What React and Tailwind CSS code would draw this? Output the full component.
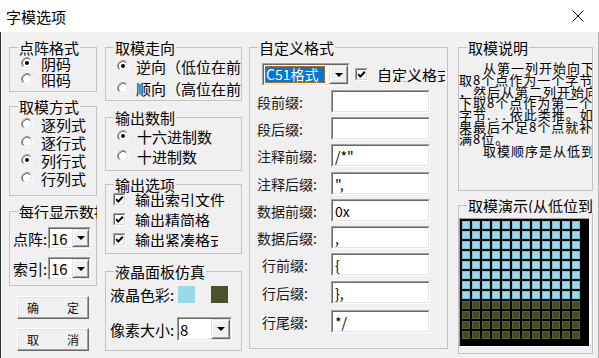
import React from "react";

const Radio = ({ checked }) => (
  <svg width="12" height="12" viewBox="0 0 12 12" className="shrink-0">
    <circle cx="6" cy="6" r="4.2" fill="#fff" />
    <path d="M2.11 9.89 A5.5 5.5 0 0 1 9.89 2.11" fill="none" stroke="#a0a0a0" />
    <path d="M9.89 2.11 A5.5 5.5 0 0 1 2.11 9.89" fill="none" stroke="#ffffff" />
    <path d="M2.82 9.18 A4.5 4.5 0 0 1 9.18 2.82" fill="none" stroke="#696969" />
    <path d="M9.18 2.82 A4.5 4.5 0 0 1 2.82 9.18" fill="none" stroke="#e3e3e3" />
    {checked && <circle cx="6" cy="6" r="2" fill="#000" />}
  </svg>
);

const Check = () => (
  <svg width="13" height="13" viewBox="0 0 13 13" className="shrink-0">
    <rect x="1" y="1" width="11" height="11" fill="#fff" />
    <path d="M0.5 12.5 V0.5 H12.5" fill="none" stroke="#a0a0a0" />
    <path d="M0.5 12.5 H12.5 V0.5" fill="none" stroke="#ffffff" />
    <path d="M1.5 11.5 V1.5 H11.5" fill="none" stroke="#696969" />
    <path d="M1.5 11.5 H11.5 V1.5" fill="none" stroke="#d4d4d4" />
    <path d="M3.2 6.2 L5.3 8.6 L9.8 3.8" fill="none" stroke="#000" strokeWidth="2" />
  </svg>
);

const Sunken = ({ className = "", children }) => (
  <div className={`flex shrink-0 border border-t-[#a0a0a0] border-l-[#a0a0a0] border-r-white border-b-white ${className}`}>
    <div className="flex flex-1 min-w-0 border border-t-[#696969] border-l-[#696969] border-r-[#e3e3e3] border-b-[#e3e3e3] bg-white">
      {children}
    </div>
  </div>
);

const DropBtn = ({ w = "w-[17px]" }) => (
  <div className={`${w} h-full shrink-0 flex items-center justify-center bg-[#f0f0f0] border border-t-[#e3e3e3] border-l-[#e3e3e3] border-r-[#696969] border-b-[#696969] shadow-[inset_1px_1px_0_#fff,inset_-1px_-1px_0_#a0a0a0]`}>
    <svg width="8" height="4" viewBox="0 0 8 4">
      <path d="M0 0H8L4 4Z" fill="#000" />
    </svg>
  </div>
);

const Select = ({ className, text, w }) => (
  <Sunken className={className}>
    <div className="flex-1 flex items-center pl-[1px] text-[15px] leading-none overflow-hidden">{text}</div>
    <DropBtn w={w} />
  </Sunken>
);

const Group = ({ title, className = "", legend = "", children }) => (
  <fieldset className={`min-w-0 shrink-0 border border-[#c3c3c3] ${className}`}>
    <legend className={`ml-[8px] px-[1px] text-[15px] leading-[15px] whitespace-nowrap ${legend}`}>{title}</legend>
    {children}
  </fieldset>
);

const Btn = ({ a, b, className = "" }) => (
  <div className={`w-[72px] h-[23px] flex items-center justify-center gap-[28px] bg-[#f0f0f0] border border-t-white border-l-white border-r-[#696969] border-b-[#696969] shadow-[inset_-1px_-1px_0_#a0a0a0,inset_1px_1px_0_#e3e3e3] text-[12px] leading-none text-[#111] ${className}`}>
    <span>{a}</span>
    <span>{b}</span>
  </div>
);

const fields = [
  ["段前缀:", "", "mt-[4px]", "pl-[7px]"],
  ["段后缀:", "", "mt-[4px]", "pl-[7px]"],
  ["注释前缀:", "/*\"", "mt-[4px]", "pl-[7px]"],
  ["注释后缀:", "\",", "mt-[5px]", "pl-[7px]"],
  ["数据前缀:", "0x", "mt-[4px]", "pl-[7px]"],
  ["数据后缀:", ",", "mt-[4px]", "pl-[7px]"],
  ["行前缀:", "{", "mt-[4px]", "pl-[12px]"],
  ["行后缀:", "},", "mt-[5px]", "pl-[12px]"],
  ["行尾缀:", "*/", "mt-[6px]", "pl-[12px]"],
];

const desc = [
  ["从第一列开始向下每", "pl-[24px]"],
  ["取8个点作为一个字节", ""],
  ["，然后从第二列开始向", ""],
  ["下取8个点作为第二个", ""],
  [null, ""],
  ["果最后不足8个点就补", ""],
  ["满8位。", ""],
  ["取模顺序是从低到高", "pl-[24px]"],
];

const cells = Array.from({ length: 144 }, (_, i) => i < 96);

export default function App() {
  return (
    <div className="w-[599px] h-[358px] overflow-hidden bg-[#f0f0f0] text-black font-['Noto_Sans_CJK_SC','Noto_Sans',sans-serif]">
      {/* title bar */}
      <div className="h-[32px] bg-white flex items-center justify-between pl-[6px] pr-[15px]">
        <span className="text-[15px] leading-none">字模选项</span>
        <svg width="12" height="12" viewBox="0 0 12 12">
          <path d="M0.5 0.5 L11.5 11.5 M11.5 0.5 L0.5 11.5" stroke="#000" strokeWidth="1" />
        </svg>
      </div>

      {/* body */}
      <div className="h-[326px] flex pl-[8px] pt-[8px] border-l border-l-[#2f3a30] border-r border-r-[#b4b4b4]">
        {/* column 1 */}
        <div className="flex flex-col w-[88px] shrink-0">
          <Group title="点阵格式" className="h-[52px]">
            <div className="h-[16px] flex items-center pl-[11px] gap-[8px] text-[15px] leading-none">
              <Radio checked />
              <span>阴码</span>
            </div>
            <div className="h-[16px] flex items-center pl-[11px] gap-[8px] text-[15px] leading-none">
              <Radio />
              <span>阳码</span>
            </div>
          </Group>

          <Group title="取模方式" className="h-[97px] mt-[7px]">
            <div className="pt-[1px]">
              {[["逐列式", false], ["逐行式", false], ["列行式", true], ["行列式", false]].map(([t, c]) => (
                <div key={t} className="h-[18px] flex items-center pl-[11px] gap-[8px] text-[15px] leading-none">
                  <Radio checked={c} />
                  <span>{t}</span>
                </div>
              ))}
            </div>
          </Group>

          <Group title="每行显示数据" className="h-[82px] mt-[8px]" legend="max-w-[79px] overflow-hidden">
            <div className="mt-[8px] flex items-center pl-[3px]">
              <span className="w-[35px] text-[15px] leading-none">点阵:</span>
              <Select className="w-[43px] h-[22px]" text="16" />
            </div>
            <div className="mt-[8px] flex items-center pl-[3px]">
              <span className="w-[35px] text-[15px] leading-none">索引:</span>
              <Select className="w-[43px] h-[23px]" text="16" />
            </div>
          </Group>

          <Btn a="确" b="定" className="mt-[10px] ml-[8px]" />
          <Btn a="取" b="消" className="mt-[9px] ml-[8px]" />
        </div>

        {/* column 2 */}
        <div className="flex flex-col w-[137px] ml-[8px] shrink-0">
          <Group title="取模走向" className="h-[61px]">
            <div className="h-[22px] flex items-center pl-[11px] gap-[7px] text-[15px] leading-none overflow-hidden whitespace-nowrap">
              <Radio checked />
              <span>逆向（低位在前）</span>
            </div>
            <div className="h-[22px] flex items-center pl-[11px] gap-[7px] text-[15px] leading-none overflow-hidden whitespace-nowrap">
              <Radio />
              <span>顺向（高位在前）</span>
            </div>
          </Group>

          <Group title="输出数制" className="h-[61px] mt-[9px]">
            <div className="pt-[1px]">
              <div className="h-[20px] flex items-center pl-[11px] gap-[8px] text-[15px] leading-none">
                <Radio checked />
                <span>十六进制数</span>
              </div>
              <div className="h-[20px] flex items-center pl-[11px] gap-[8px] text-[15px] leading-none">
                <Radio />
                <span>十进制数</span>
              </div>
            </div>
          </Group>

          <Group title="输出选项" className="h-[77px] mt-[6px]">
            <div className="-mt-[3px]">
              <div className="h-[20px] flex items-center pl-[7px] gap-[9px] text-[15px] leading-none whitespace-nowrap">
                <Check />
                <span className="overflow-hidden">输出索引文件</span>
              </div>
              <div className="h-[20px] flex items-center pl-[7px] gap-[9px] text-[15px] leading-none whitespace-nowrap">
                <Check />
                <span className="overflow-hidden max-w-[75px]">输出精简格式</span>
              </div>
              <div className="h-[20px] flex items-center pl-[7px] gap-[9px] text-[15px] leading-none whitespace-nowrap">
                <Check />
                <span className="overflow-hidden max-w-[83px]">输出紧凑格式</span>
              </div>
            </div>
          </Group>

          <Group title="液晶面板仿真" className="h-[87px] mt-[10px]">
            <div className="mt-[7px] h-[17px] flex items-center pl-[4px]">
              <span className="w-[68px] text-[15px] leading-none whitespace-nowrap">液晶色彩:</span>
              <div className="w-[17px] h-[17px] bg-[#99d9ea]" />
              <div className="w-[17px] h-[17px] ml-[16px] bg-[#4b5229]" />
            </div>
            <div className="mt-[14px] flex items-center pl-[4px]">
              <span className="w-[67px] text-[15px] leading-none whitespace-nowrap">像素大小:</span>
              <Select className="w-[55px] h-[24px]" text="8" w="w-[19px]" />
            </div>
          </Group>
        </div>

        {/* column 3 */}
        <div className="flex flex-col w-[199px] ml-[7px] shrink-0">
          <Group title="自定义格式" className="h-[309px]">
            <div className="mt-[8px] h-[23px] flex items-center pl-[12px]">
              <Sunken className="w-[88px] h-[23px]">
                <div className="flex-1 p-[1px] flex">
                  <div className="w-[60px] bg-[#0078d7] text-white text-[14px] leading-[17px] pl-[1px] outline-1 outline-dotted outline-[#c87a2a] -outline-offset-1 whitespace-nowrap overflow-hidden">
                    C51格式
                  </div>
                </div>
                <DropBtn w="w-[19px]" />
              </Sunken>
              <div className="ml-[5px] flex items-center gap-[9px] whitespace-nowrap">
                <Check />
                <span className="max-w-[68px] overflow-hidden text-[15px] leading-none">自定义格式</span>
              </div>
            </div>
            {fields.map(([label, val, mt, pl]) => (
              <div key={label} className={`h-[23px] flex items-center ${mt}`}>
                <span className={`w-[81px] ${pl} text-[14px] leading-none text-[#1a1a1a] whitespace-nowrap`}>{label}</span>
                <Sunken className="w-[99px] h-[23px]">
                  <div className="flex-1 flex items-center pl-[2px] text-[14px] leading-none">{val}</div>
                </Sunken>
              </div>
            ))}
          </Group>
        </div>

        {/* column 4 */}
        <div className="flex flex-col w-[135px] ml-[10px] shrink-0">
          <Group title="取模说明" className="h-[151px]">
            <div className="mt-[5px] pt-[2px] pb-[4px] overflow-hidden text-[13px] leading-[11.8px] tracking-[1px]">
              {desc.map(([t, pl], i) => (
                <div key={i} className={`whitespace-nowrap ${pl}`}>
                  {t === null ? (
                    <>
                      字节<span className="tracking-[4px]">...</span>依此类推。如
                    </>
                  ) : (
                    t
                  )}
                </div>
              ))}
            </div>
          </Group>

          <Group title="取模演示(从低位到高位)" className="h-[156px] mt-[7px]" legend="max-w-[127px] overflow-hidden">
            <div className="mt-[5px] w-[131px] h-[129px] border border-t-[#a0a0a0] border-l-[#a0a0a0] border-r-white border-b-white">
              <div className="w-full h-full bg-black p-[2px]">
                <div className="grid grid-cols-[repeat(12,8px)] auto-rows-[8px] gap-[2px]">
                  {cells.map((blue, i) => (
                    <div
                      key={i}
                      className={blue ? "bg-[#99d9ea] border border-[#7fbfd2]" : "bg-[#454b24] border border-[#5a6133]"}
                    />
                  ))}
                </div>
              </div>
            </div>
          </Group>
        </div>
      </div>
    </div>
  );
}
